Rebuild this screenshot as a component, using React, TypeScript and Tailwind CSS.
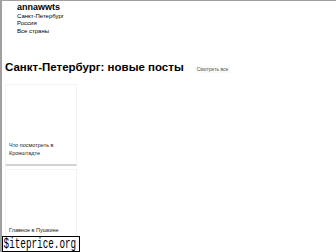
export default function App() {
  const posts = [
    { title: "Что посмотреть в Кронштадте" },
    { title: "Главное в Пушкине" },
  ]

  return (
    <div className="relative w-[336px] h-[252px] overflow-hidden bg-white border-l-2 border-t border-[#a0a0a0] font-['Liberation_Sans',Arial,sans-serif] text-black">
      {/* Header */}
      <div className="pl-[15px] pt-[1px]">
        <div className="text-[9px] font-bold leading-[10px]">annawwts</div>
        <div className="text-[6px] leading-[7px] mt-[1px]">Санкт-Петербург</div>
        <div className="text-[6px] leading-[7px]">Россия</div>
        <div className="text-[6px] leading-[7px] mt-[1px]">Все страны</div>
      </div>

      {/* Section title */}
      <div className="flex items-end gap-[11px] pl-[3px] mt-[25px]">
        <h2 className="text-[11.5px] font-bold leading-[14px]">Санкт-Петербург: новые посты</h2>
        <span className="text-[5px] leading-[7px] text-[#555] bg-[#fafafa] px-[2px] mb-[1px]">Смотреть все</span>
      </div>

      {/* Post cards */}
      <div className="flex flex-col gap-[3px] pl-[3px] mt-[10px]">
        {posts.map((p) => (
          <div key={p.title} className="w-[72px] h-[82px] border border-[#f3f3f3] border-b-2 border-b-[#d4d4d4] flex flex-col">
            <div className="h-[56px] shrink-0" />
            <div className="px-[3px] text-[5.5px] leading-[8px] text-[#222]">{p.title}</div>
          </div>
        ))}
      </div>

      {/* Watermark */}
      <div className="absolute left-0 bottom-0 h-[16px] w-[78px] bg-white border border-black overflow-hidden">
        <div className="origin-left scale-x-[0.62] font-['Liberation_Mono',monospace] text-[15px] leading-[15px] whitespace-nowrap pl-[1px]">
          $iteprice.org
        </div>
      </div>
    </div>
  )
}
